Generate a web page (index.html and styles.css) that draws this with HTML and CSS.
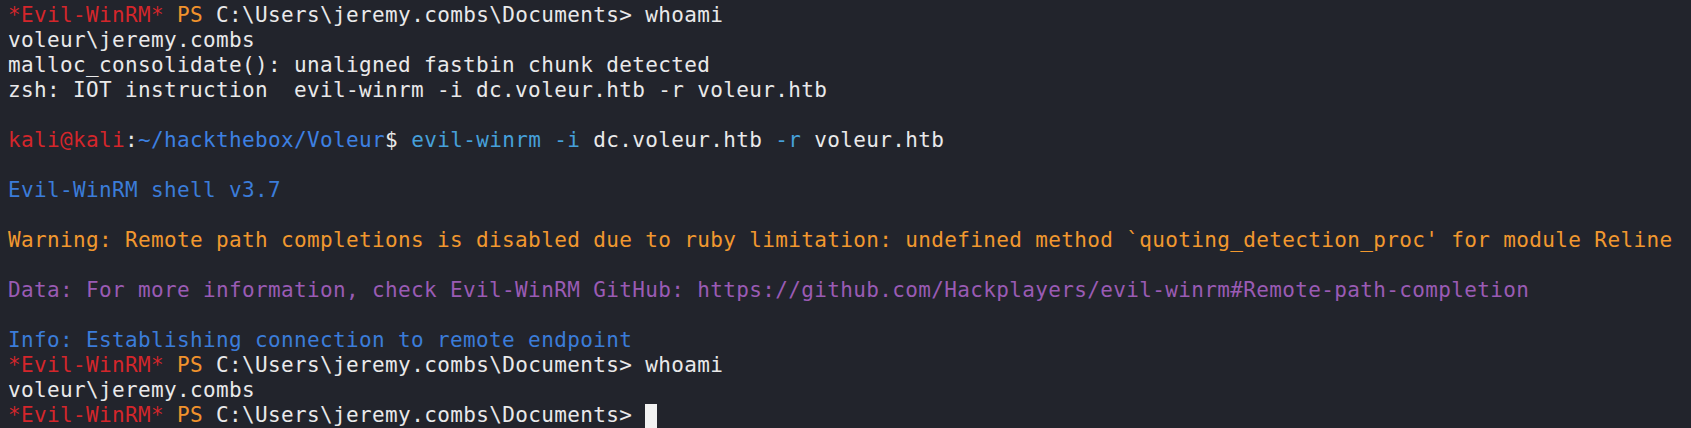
FILE: index.html
```html
<!DOCTYPE html>
<html>
<head>
<meta charset="utf-8">
<link rel="stylesheet" href="styles.css">
</head>
<body>
<div class="term">
<div class="ln"><span class="red">*Evil-WinRM*</span> <span class="org">PS</span> C:\Users\jeremy.combs\Documents&gt; whoami</div>
<div class="ln">voleur\jeremy.combs</div>
<div class="ln">malloc_consolidate(): unaligned fastbin chunk detected</div>
<div class="ln">zsh: IOT instruction  evil-winrm -i dc.voleur.htb -r voleur.htb</div>
<div class="ln"> </div>
<div class="ln"><span class="red">kali@kali</span>:<span class="path">~/hackthebox/Voleur</span>$ <span class="cmd">evil-winrm -i</span> dc.voleur.htb <span class="cmd">-r</span> voleur.htb</div>
<div class="ln"> </div>
<div class="ln blue">Evil-WinRM shell v3.7</div>
<div class="ln"> </div>
<div class="ln warn">Warning: Remote path completions is disabled due to ruby limitation: undefined method `quoting_detection_proc' for module Reline</div>
<div class="ln"> </div>
<div class="ln data">Data: For more information, check Evil-WinRM GitHub: https://github.com/Hackplayers/evil-winrm#Remote-path-completion</div>
<div class="ln"> </div>
<div class="ln blue">Info: Establishing connection to remote endpoint</div>
<div class="ln"><span class="red">*Evil-WinRM*</span> <span class="org">PS</span> C:\Users\jeremy.combs\Documents&gt; whoami</div>
<div class="ln">voleur\jeremy.combs</div>
<div class="ln"><span class="red">*Evil-WinRM*</span> <span class="org">PS</span> C:\Users\jeremy.combs\Documents&gt; <span class="cursor"></span></div>
</div>
</body>
</html>
```
FILE: styles.css
```css
html, body {
  margin: 0;
  padding: 0;
  background: #22242c;
  overflow: hidden;
}
.term {
  padding: 3px 0 0 8px;
  font-family: "DejaVu Sans Mono", "Liberation Mono", monospace;
  font-size: 21px;
  letter-spacing: 0.36px;
  line-height: 25px;
  color: #e9e9ea;
}
.ln {
  white-space: pre;
  height: 25px;
}
.red { color: #d4262b; }
.org { color: #f0922c; }
.path { color: #3d80e2; }
.cmd { color: #46a0da; }
.blue { color: #3b7cd9; }
.warn { color: #f1982f; }
.data { color: #9a5bb4; }
.cursor {
  display: inline-block;
  width: 12px;
  height: 24px;
  background: #f2f2f2;
  vertical-align: top;
  margin-top: 1px;
}
```
